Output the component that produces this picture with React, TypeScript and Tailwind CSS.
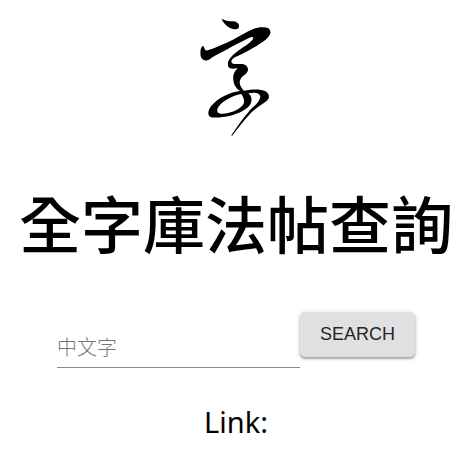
function BrushLogo() {
  return (
    <svg viewBox="0 0 285 405" className="h-[135px] w-[95px]" role="img" aria-label="字">
      <path d="M98 26 C105 31 118 34 133 34 C148 36 154 46 148 55 C140 62 122 56 114 48 C107 41 101 36 98 26Z" />
      <path
        d="M42 108 C36 109 33 122 35 138 C38 151 50 154 60 149 C74 139 86 133 105 123 C132 108 160 94 180 84 C192 78 196 82 190 90 C179 103 157 114 139 129 C123 142 115 153 117 167 C118 176 132 178 146 174 C135 186 131 196 133 210 C134 224 142 236 153 243 C120 247 88 264 67 287 C56 301 56 315 63 320 C74 325 102 322 124 317 C151 310 174 299 184 283 C191 270 187 257 178 250 C198 246 213 249 214 260 C212 274 199 285 186 297 C166 319 145 349 127 376 L129 378 C145 356 164 332 181 314 C198 295 222 283 235 271 C244 262 240 251 230 244 C213 236 191 238 165 242 C152 229 149 216 156 205 C162 196 174 193 177 181 C178 168 168 160 151 162 C136 163 127 162 127 154 C129 143 143 140 160 131 C187 117 216 101 233 86 C246 75 248 63 238 55 C227 50 207 51 193 57 C173 65 153 78 132 89 C107 101 80 113 56 121 C46 124 48 113 42 108Z M157 252 C163 262 168 271 164 281 C157 294 139 303 117 309 C103 313 88 312 85 305 C82 292 98 277 117 267 C130 260 143 254 157 252Z"
        fillRule="evenodd"
      />
    </svg>
  );
}

export default function App() {
  return (
    <main className="flex min-h-screen flex-col items-center bg-white pt-[10px] font-['Noto_Sans','Noto_Sans_CJK_TC',sans-serif] text-black">
      <BrushLogo />
      <h1 className="mt-7 text-center font-['Noto_Sans_CJK_TC',sans-serif] text-[62px] leading-[99px] font-medium whitespace-nowrap">
        全字庫法帖查詢
      </h1>
      <form className="mt-10 flex items-start justify-center" onSubmit={(event) => event.preventDefault()}>
        <input
          type="text"
          aria-label="中文字"
          placeholder="中文字"
          className="h-14 w-[243px] border-b border-[#8c8c8c] bg-transparent pt-3.5 font-['Noto_Sans_CJK_TC',sans-serif] text-xl font-light outline-none placeholder:text-[#757575]"
        />
        <button
          type="submit"
          className="h-[45px] rounded-[5px] bg-[#e0e0e0] px-5 pb-0.5 font-['Liberation_Sans',Arial,sans-serif] text-lg text-black/87 shadow-[0_2px_2px_rgba(0,0,0,0.25),0_1px_5px_rgba(0,0,0,0.2)]"
        >
          SEARCH
        </button>
      </form>
      <p className="mt-8 text-[29px] leading-[43px]">Link:</p>
    </main>
  );
}
